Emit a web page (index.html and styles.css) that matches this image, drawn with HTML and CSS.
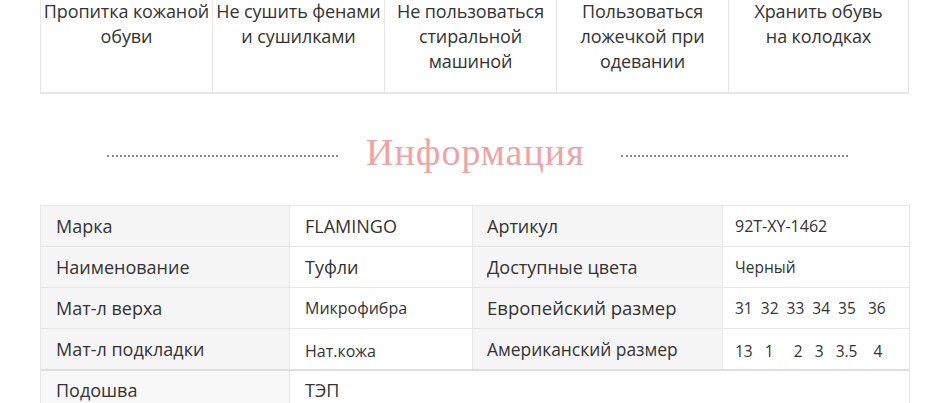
FILE: index.html
```html
<!DOCTYPE html>
<html lang="ru">
<head>
<meta charset="utf-8">
<link rel="stylesheet" href="styles.css">
</head>
<body>
<div class="care">
  <div class="care-cell">Пропитка кожаной обуви</div>
  <div class="care-cell">Не сушить фенами и сушилками</div>
  <div class="care-cell">Не пользоваться стиральной машиной</div>
  <div class="care-cell">Пользоваться ложечкой при одевании</div>
  <div class="care-cell care-last">Хранить обувь на колодках</div>
</div>

<div class="heading">
  <span class="dots dots-left"></span>
  <h2 class="heading-text">Информация</h2>
  <span class="dots dots-right"></span>
</div>

<div class="info">
  <div class="row">
    <div class="lbl">Марка</div>
    <div class="val v18">FLAMINGO</div>
    <div class="lbl lbl2">Артикул</div>
    <div class="val v16 val4">92T-XY-1462</div>
  </div>
  <div class="row">
    <div class="lbl">Наименование</div>
    <div class="val v18">Туфли</div>
    <div class="lbl lbl2">Доступные цвета</div>
    <div class="val v15 val4">Черный</div>
  </div>
  <div class="row">
    <div class="lbl">Мат-л верха</div>
    <div class="val v16">Микрофибра</div>
    <div class="lbl lbl2 big">Европейский размер</div>
    <div class="val v155 val4">31&nbsp; 32&nbsp; 33&nbsp; 34&nbsp; 35&nbsp;&nbsp; 36</div>
  </div>
  <div class="row">
    <div class="lbl">Мат-л подкладки</div>
    <div class="val v16 low">Нат.кожа</div>
    <div class="lbl lbl2 small">Американский размер</div>
    <div class="val v155 val4 low">13&nbsp;&nbsp; 1&nbsp;&nbsp;&nbsp;&nbsp; 2&nbsp;&nbsp; 3&nbsp;&nbsp; 3.5&nbsp;&nbsp;&nbsp; 4</div>
  </div>
</div>

<div class="info-extra">
  <div class="lbl">Подошва</div>
  <div class="val v18">ТЭП</div>
</div>
</body>
</html>
```
FILE: styles.css
```css
html, body {
  margin: 0;
  padding: 0;
  background: #ffffff;
}

body {
  font-family: "Open Sans", "Noto Sans", sans-serif;
  color: #333333;
  overflow: hidden;
}

.care {
  display: grid;
  grid-template-columns: 172px 172px 172px 172px 1fr;
  width: 869px;
  margin-left: 40px;
  border-left: 1px solid #e6e6e6;
  border-right: 1px solid #e6e6e6;
  border-bottom: 2px solid #e6e6e6;
  box-sizing: border-box;
}

.care-cell {
  font-size: 18px;
  line-height: 25px;
  text-align: center;
  padding: 0 1px 17px;
  margin-top: -1px;
  height: 93px;
  box-sizing: border-box;
  border-right: 1px solid #e6e6e6;
  letter-spacing: -0.1px;
}

.care-last {
  border-right: none;
  padding: 0 14px 17px;
}

.heading {
  display: flex;
  align-items: center;
  margin: 0 0 0 107px;
  height: 111px;
  padding-top: 4px;
  box-sizing: border-box;
}

.dots {
  display: block;
  height: 0;
  border-top: 2px dotted #8a8a8a;
}

.dots-left {
  width: 231px;
  margin-top: 8px;
}

.dots-right {
  width: 227px;
  margin-top: 8px;
}

.heading-text {
  margin: 0 36px 0 28px;
  font-family: "Liberation Serif", "DejaVu Serif", serif;
  font-weight: normal;
  font-size: 38px;
  letter-spacing: 1px;
  color: #f2a2a2;
  line-height: 1;
}

.info {
  margin-left: 40px;
  width: 870px;
  border: 1px solid #e6e6e6;
  border-bottom: none;
  box-sizing: border-box;
}

.row {
  display: grid;
  grid-template-columns: 249px 183px 250px 1fr;
  height: 41px;
  border-bottom: 1px solid #e6e6e6;
  box-sizing: border-box;
}

.row:last-child {
  height: 42px;
  border-bottom: 2px solid #dedede;
}

.lbl {
  background: #f5f5f5;
  font-size: 18px;
  padding-left: 15px;
  padding-bottom: 1px;
  display: flex;
  align-items: center;
  border-right: 1px solid #e6e6e6;
}

.lbl2 {
  padding-left: 14px;
}

.big {
  font-size: 18.5px;
}

.small {
  font-size: 17.4px;
}

.val {
  display: flex;
  align-items: center;
  padding-left: 15px;
  border-right: 1px solid #e6e6e6;
  background: #ffffff;
}

.val4 {
  padding-left: 12px;
  border-right: none;
}

.v18 { font-size: 18px; padding-bottom: 1px; }
.v16 { font-size: 16px; }
.v155 { font-size: 15.5px; }
.v15 { font-size: 15.5px; }

.low {
  padding-top: 3px;
}

.info-extra {
  display: grid;
  grid-template-columns: 249px 1fr;
  margin-left: 40px;
  width: 870px;
  height: 42px;
  border-left: 1px solid #e6e6e6;
  border-right: 1px solid #e6e6e6;
  box-sizing: border-box;
}

.info-extra .lbl {
  background: #f8f8f8;
  padding-bottom: 4px;
}

.info-extra .val {
  border-right: none;
  padding-bottom: 4px;
}
```
